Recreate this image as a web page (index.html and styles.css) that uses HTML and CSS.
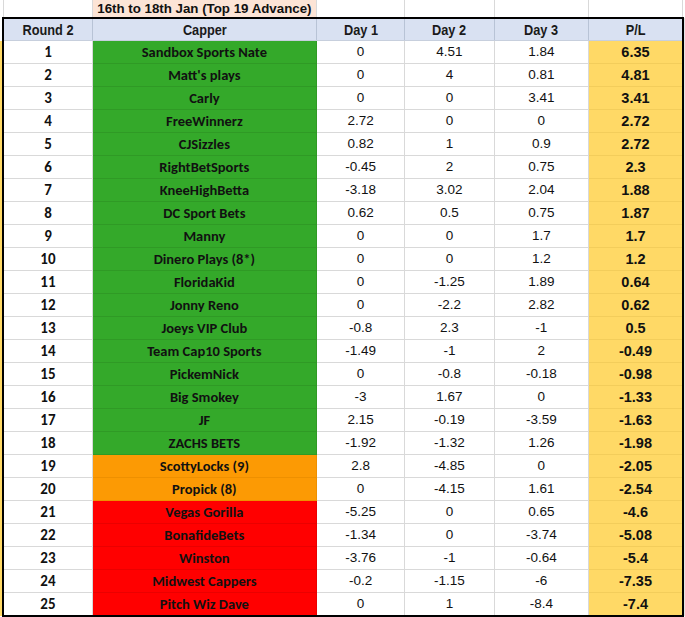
FILE: index.html
```html
<!DOCTYPE html>
<html>
<head>
<meta charset="utf-8">
<link rel="stylesheet" href="styles.css">
</head>
<body>
<table class="sheet">
  <colgroup>
    <col class="w-stub"><col class="w-rnd"><col class="w-cap"><col class="w-d1"><col class="w-d2"><col class="w-d3"><col class="w-pl"><col class="w-end">
  </colgroup>
  <tr class="title-row">
    <td class="stub"></td><td></td><td class="title">16th to 18th Jan (Top 19 Advance)</td><td></td><td></td><td></td><td></td><td class="end"></td>
  </tr>
  <tr class="head-row">
    <td class="stub"></td><th class="first"><span class="nar">Round 2</span></th><th><span class="nar">Capper</span></th><th><span class="nar">Day 1</span></th><th><span class="nar">Day 2</span></th><th><span class="nar">Day 3</span></th><th class="last"><span class="nar">P/L</span></th><td class="end"></td>
  </tr>
  <tr><td class="stub y"></td><td class="first rk">1</td><td class="cap g">Sandbox Sports Nate</td><td class="v">0</td><td class="v">4.51</td><td class="v">1.84</td><td class="pl last">6.35</td><td class="end"></td></tr>
  <tr><td class="stub y"></td><td class="first rk">2</td><td class="cap g">Matt's plays</td><td class="v">0</td><td class="v">4</td><td class="v">0.81</td><td class="pl last">4.81</td><td class="end"></td></tr>
  <tr><td class="stub y"></td><td class="first rk">3</td><td class="cap g">Carly</td><td class="v">0</td><td class="v">0</td><td class="v">3.41</td><td class="pl last">3.41</td><td class="end"></td></tr>
  <tr><td class="stub y"></td><td class="first rk">4</td><td class="cap g">FreeWinnerz</td><td class="v">2.72</td><td class="v">0</td><td class="v">0</td><td class="pl last">2.72</td><td class="end"></td></tr>
  <tr><td class="stub y"></td><td class="first rk">5</td><td class="cap g">CJSizzles</td><td class="v">0.82</td><td class="v">1</td><td class="v">0.9</td><td class="pl last">2.72</td><td class="end"></td></tr>
  <tr><td class="stub y"></td><td class="first rk">6</td><td class="cap g">RightBetSports</td><td class="v">-0.45</td><td class="v">2</td><td class="v">0.75</td><td class="pl last">2.3</td><td class="end"></td></tr>
  <tr><td class="stub y"></td><td class="first rk">7</td><td class="cap g">KneeHighBetta</td><td class="v">-3.18</td><td class="v">3.02</td><td class="v">2.04</td><td class="pl last">1.88</td><td class="end"></td></tr>
  <tr><td class="stub y"></td><td class="first rk">8</td><td class="cap g">DC Sport Bets</td><td class="v">0.62</td><td class="v">0.5</td><td class="v">0.75</td><td class="pl last">1.87</td><td class="end"></td></tr>
  <tr><td class="stub y"></td><td class="first rk">9</td><td class="cap g">Manny</td><td class="v">0</td><td class="v">0</td><td class="v">1.7</td><td class="pl last">1.7</td><td class="end"></td></tr>
  <tr><td class="stub y"></td><td class="first rk">10</td><td class="cap g">Dinero Plays (8*)</td><td class="v">0</td><td class="v">0</td><td class="v">1.2</td><td class="pl last">1.2</td><td class="end"></td></tr>
  <tr><td class="stub y"></td><td class="first rk">11</td><td class="cap g">FloridaKid</td><td class="v">0</td><td class="v">-1.25</td><td class="v">1.89</td><td class="pl last">0.64</td><td class="end"></td></tr>
  <tr><td class="stub y"></td><td class="first rk">12</td><td class="cap g">Jonny Reno</td><td class="v">0</td><td class="v">-2.2</td><td class="v">2.82</td><td class="pl last">0.62</td><td class="end"></td></tr>
  <tr><td class="stub y"></td><td class="first rk">13</td><td class="cap g">Joeys VIP Club</td><td class="v">-0.8</td><td class="v">2.3</td><td class="v">-1</td><td class="pl last">0.5</td><td class="end"></td></tr>
  <tr><td class="stub y"></td><td class="first rk">14</td><td class="cap g">Team Cap10 Sports</td><td class="v">-1.49</td><td class="v">-1</td><td class="v">2</td><td class="pl last">-0.49</td><td class="end"></td></tr>
  <tr><td class="stub y"></td><td class="first rk">15</td><td class="cap g">PickemNick</td><td class="v">0</td><td class="v">-0.8</td><td class="v">-0.18</td><td class="pl last">-0.98</td><td class="end"></td></tr>
  <tr><td class="stub y"></td><td class="first rk">16</td><td class="cap g">Big Smokey</td><td class="v">-3</td><td class="v">1.67</td><td class="v">0</td><td class="pl last">-1.33</td><td class="end"></td></tr>
  <tr><td class="stub y"></td><td class="first rk">17</td><td class="cap g">JF</td><td class="v">2.15</td><td class="v">-0.19</td><td class="v">-3.59</td><td class="pl last">-1.63</td><td class="end"></td></tr>
  <tr><td class="stub y"></td><td class="first rk">18</td><td class="cap g">ZACHS BETS</td><td class="v">-1.92</td><td class="v">-1.32</td><td class="v">1.26</td><td class="pl last">-1.98</td><td class="end"></td></tr>
  <tr><td class="stub y"></td><td class="first rk">19</td><td class="cap o">ScottyLocks (9)</td><td class="v">2.8</td><td class="v">-4.85</td><td class="v">0</td><td class="pl last">-2.05</td><td class="end"></td></tr>
  <tr><td class="stub y"></td><td class="first rk">20</td><td class="cap o">Propick (8)</td><td class="v">0</td><td class="v">-4.15</td><td class="v">1.61</td><td class="pl last">-2.54</td><td class="end"></td></tr>
  <tr><td class="stub y"></td><td class="first rk">21</td><td class="cap r">Vegas Gorilla</td><td class="v">-5.25</td><td class="v">0</td><td class="v">0.65</td><td class="pl last">-4.6</td><td class="end"></td></tr>
  <tr><td class="stub y"></td><td class="first rk">22</td><td class="cap r">BonafideBets</td><td class="v">-1.34</td><td class="v">0</td><td class="v">-3.74</td><td class="pl last">-5.08</td><td class="end"></td></tr>
  <tr><td class="stub y"></td><td class="first rk">23</td><td class="cap r">Winston</td><td class="v">-3.76</td><td class="v">-1</td><td class="v">-0.64</td><td class="pl last">-5.4</td><td class="end"></td></tr>
  <tr><td class="stub y"></td><td class="first rk">24</td><td class="cap r">Midwest Cappers</td><td class="v">-0.2</td><td class="v">-1.15</td><td class="v">-6</td><td class="pl last">-7.35</td><td class="end"></td></tr>
  <tr class="bottom"><td class="stub y"></td><td class="first rk">25</td><td class="cap r">Pitch Wiz Dave</td><td class="v">0</td><td class="v">1</td><td class="v">-8.4</td><td class="pl last">-7.4</td><td class="end"></td></tr>
</table>
</body>
</html>
```
FILE: styles.css
```css
html, body {
  margin: 0;
  padding: 0;
  background: #ffffff;
}

.sheet {
  border-collapse: collapse;
  table-layout: fixed;
  width: 685px;
  font-family: "Liberation Sans", Arial, sans-serif;
  color: #111;
}

.w-stub { width: 3px; }
.w-rnd { width: 89px; }
.w-cap { width: 223px; }
.w-d1 { width: 88px; }
.w-d2 { width: 89px; }
.w-d3 { width: 94px; }
.w-pl { width: 94px; }
.w-end { width: 2px; }

td, th {
  padding: 0;
  text-align: center;
  white-space: nowrap;
  overflow: hidden;
  border: 1px solid #d9d9d9;
  height: 22px;
  font-size: 13.3px;
  line-height: 16px;
}

.stub {
  border-left: none;
  border-top: none;
  border-bottom: none;
  background: #ffffff;
}

.stub.y {
  background: #ffd966;
}

.end {
  border: none;
  background: #e4e4e4;
}

.title-row td {
  height: 17px;
  border-top: none;
}

.title-row .stub {
  border-right: 1px solid #d9d9d9;
}

.title-row .end {
  background: #ffffff;
}

.title {
  background: #fce4d6;
  font-weight: bold;
  font-size: 13.3px;
}

.head-row th {
  border-top: 2px solid #000;
  background: #d9e1f2;
  font-weight: bold;
  font-size: 15px;
  height: 21px;
  border-left-color: #b8c3d6;
  border-right-color: #b8c3d6;
  border-bottom-color: #c7cfdd;
}

.nar {
  display: inline-block;
  transform: scaleX(0.85);
  color: #1a1a1a;
}

.head-row td.end {
  border-top: none;
}

.first {
  border-left: 2px solid #000 !important;
}

.last {
  border-right: 2px solid #000 !important;
}

.bottom td:not(.stub):not(.end) {
  border-bottom: 2px solid #000;
}

.rk {
  font-family: Carlito, Lato, "Open Sans", sans-serif;
  font-weight: bold;
  font-size: 15px;
}

.cap {
  font-family: Carlito, Lato, "Open Sans", sans-serif;
  font-weight: bold;
  font-size: 14.5px;
}

.cap.g {
  background: #34a92a;
  border-color: #2f9a25;
}

.cap.o {
  background: #fc9a04;
  border-color: #ee9000;
}

.cap.r {
  background: #ff0000;
  border-color: #ea0000;
}

.v {
  font-size: 13.5px;
}

.pl {
  background: #ffd966;
  border-color: #f3cd5b;
  font-weight: bold;
  font-size: 14.5px;
}
```
